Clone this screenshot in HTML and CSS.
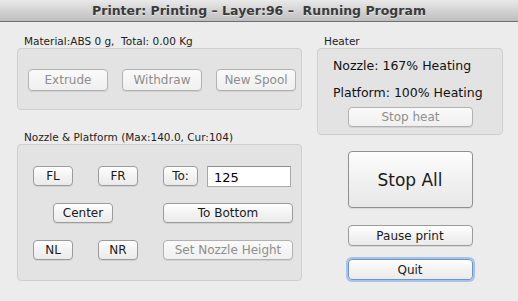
FILE: index.html
```html
<!DOCTYPE html>
<html>
<head>
  <meta charset="UTF-8">
  <title>Printer</title>
  <link rel="stylesheet" href="styles.css">
</head>
<body>
  <div class="titlebar">Printer: Printing &ndash; Layer:96 &ndash;&nbsp; Running Program</div>

  <div class="main">
    <div class="col-left">
      <div class="group-label">Material:ABS 0 g,&nbsp; Total: 0.00 Kg</div>
      <div class="group material">
        <button class="btn" disabled>Extrude</button>
        <button class="btn" disabled>Withdraw</button>
        <button class="btn" disabled>New Spool</button>
      </div>

      <div class="group-label second">Nozzle &amp; Platform (Max:140.0, Cur:104)</div>
      <div class="group platform">
        <button class="btn small">FL</button>
        <button class="btn small">FR</button>
        <div class="to-row">
          <button class="btn to">To:</button>
          <input class="height-input" type="text" value="125">
        </div>
        <button class="btn center">Center</button>
        <button class="btn wide">To Bottom</button>
        <button class="btn small">NL</button>
        <button class="btn small">NR</button>
        <button class="btn wide" disabled>Set Nozzle Height</button>
      </div>
    </div>

    <div class="col-right">
      <div class="group-label">Heater</div>
      <div class="group heater">
        <div class="heat-line">Nozzle: 167% Heating</div>
        <div class="heat-line">Platform: 100% Heating</div>
        <button class="btn action stop-heat" disabled>Stop heat</button>
      </div>

      <button class="btn action stop-all">Stop All</button>
      <button class="btn action pause">Pause print</button>
      <button class="btn action quit">Quit</button>
    </div>
  </div>
</body>
</html>
```

FILE: styles.css
```css
body {
  margin: 0;
  width: 518px;
  height: 301px;
  overflow: hidden;
  background-color: #ececec;
  font-family: "DejaVu Sans", sans-serif;
  font-size: 12px;
  color: #111;
}

.titlebar {
  height: 21px;
  line-height: 21px;
  border-bottom: 1px solid #6f6f6f;
  background: linear-gradient(#e9e9e9, #cfcfcf 60%, #bdbdbd);
  text-align: center;
  font-weight: bold;
  font-size: 12.5px;
  color: #3b3b3b;
  text-shadow: 0 1px 0 rgba(255,255,255,0.5);
}

.main {
  display: flex;
  gap: 15px;
  padding: 0 15px 0 17px;
}

.col-left {
  width: 285px;
}

.col-right {
  width: 186px;
  display: flex;
  flex-direction: column;
  align-items: center;
}

.col-right .group-label,
.col-right .group {
  align-self: stretch;
}

.group-label {
  margin: 13px 0 0 7px;
  height: 13px;
  line-height: 13px;
  font-size: 10.5px;
  color: #222;
}

.group-label.second {
  margin-top: 21px;
}

.group {
  box-sizing: border-box;
  background-color: #e3e3e3;
  border: 1px solid #cfcfcf;
  border-radius: 4px;
}

.material {
  height: 62px;
  display: flex;
  gap: 14px;
  padding: 20px 0 0 10px;
}

.material .btn {
  width: 80px;
  height: 22px;
}

.platform {
  height: 137px;
  display: grid;
  grid-template-columns: 40px 40px 130px;
  grid-auto-rows: 20px;
  column-gap: 25px;
  row-gap: 17px;
  padding: 21px 0 0 15px;
  align-content: start;
}

.to-row {
  display: flex;
  gap: 9px;
}

.btn {
  box-sizing: border-box;
  margin: 0;
  padding: 0;
  height: 20px;
  font-family: inherit;
  font-size: 12px;
  color: #1a1a1a;
  background: linear-gradient(#ffffff, #f3f3f3 50%, #ebebeb);
  border: 1px solid #9b9b9b;
  border-radius: 4px;
  box-shadow: 0 1px 0 rgba(0,0,0,0.08);
}

.btn:disabled {
  color: #8e8e8e;
  border-color: #b2b2b2;
  background: linear-gradient(#fafafa, #f0f0f0);
}

.btn.to {
  width: 35px;
}

.height-input {
  box-sizing: border-box;
  width: 84px;
  height: 21px;
  margin: 0;
  padding: 1px 0 0 6px;
  font-family: inherit;
  font-size: 13px;
  color: #000;
  background: #fff;
  border: 1px solid #a8a8a8;
  border-top-color: #8c8c8c;
  border-radius: 0;
  outline: none;
}

.btn.center {
  grid-column: 1 / 3;
  width: 60px;
  margin-left: 20px;
}

.heater {
  height: 87px;
  padding: 3px 0 0 15px;
}

.heat-line {
  height: 27px;
  line-height: 27px;
  font-size: 12.5px;
  color: #111;
}

.btn.action {
  width: 125px;
}

.stop-heat {
  display: block;
  margin: 1px 0 0 15px;
}

.stop-all {
  height: 57px;
  margin-top: 16px;
  font-size: 17px;
  background: linear-gradient(#fdfdfd, #f1f1f1 50%, #e8e8e8);
  border-color: #8f8f8f;
}

.pause {
  height: 21px;
  margin-top: 17px;
}

.quit {
  height: 21px;
  margin-top: 13px;
  border-color: #6d95cc;
  box-shadow: 0 0 0 2px rgba(110,160,225,0.55);
}
```
